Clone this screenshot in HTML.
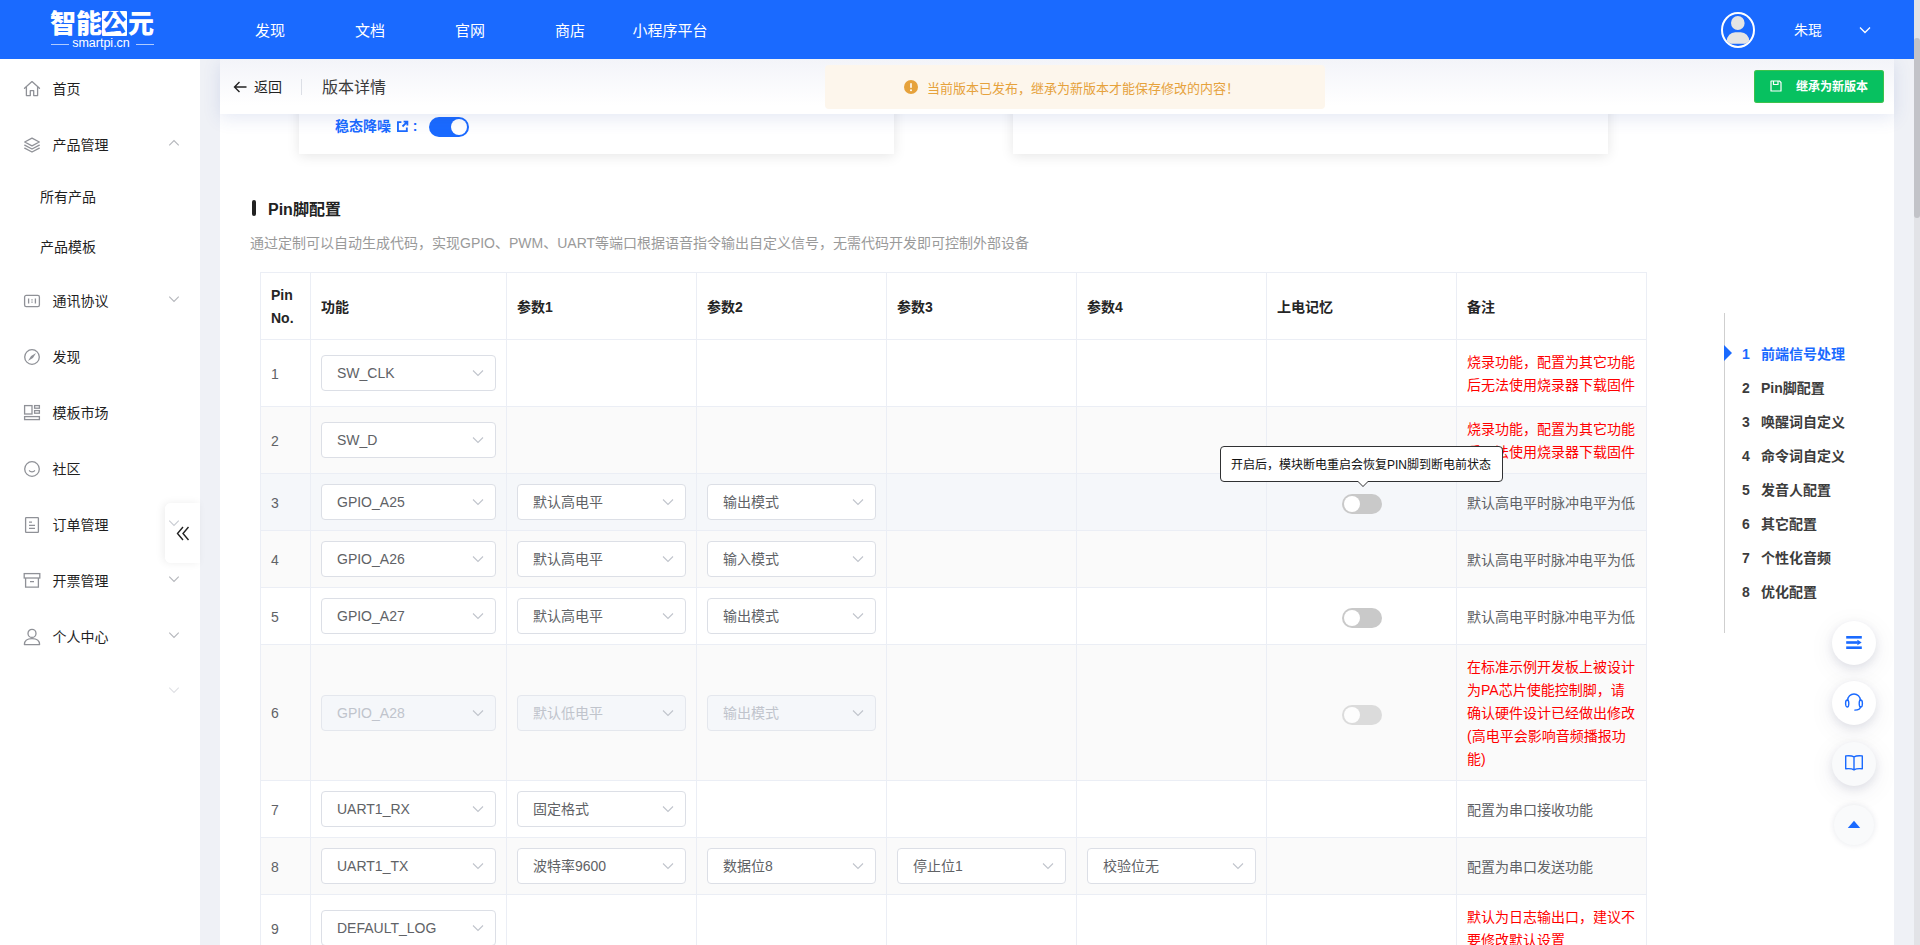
<!DOCTYPE html>
<html lang="zh-CN">
<head>
<meta charset="utf-8">
<title>版本详情</title>
<style>
*{box-sizing:border-box;margin:0;padding:0}
html,body{width:1920px;height:945px;overflow:hidden}
body{font-family:"Liberation Sans","Noto Sans CJK SC",sans-serif;font-size:14px;color:#333;background:#eff1f6;position:relative}
/* header */
#hdr{position:absolute;left:0;top:0;width:1914px;height:59px;background:#1a6aff;z-index:30}
#hdr .nav{position:absolute;top:0;height:59px;width:100px;text-align:center;line-height:62px;color:#fff;font-size:15px}
#logo{position:absolute;left:48px;top:8px;width:108px;height:44px;color:#fff}
#logo .cn{position:absolute;left:0;top:-1px;width:108px;text-align:center;font-size:26px;font-weight:900;line-height:34px;white-space:nowrap}
#logo .cn b{display:inline-block;background:#fff;color:#1a6aff;height:25px;line-height:24px;width:25px;margin:0 1px 0 0;font-weight:900;font-size:24px;vertical-align:2px;text-align:center;border-radius:1px}
#logo .en{position:absolute;left:-1px;top:28px;width:108px;text-align:center;font-size:12.500px;line-height:14px}
#logo .ln{position:absolute;top:36px;height:1px;width:18px;background:rgba(255,255,255,.65)}
#user{position:absolute;left:1721px;top:12px;width:34px;height:36px}
#uname{position:absolute;left:1794px;top:0;line-height:61px;color:#fff;font-size:14px}
/* sidebar */
#side{position:absolute;left:0;top:59px;width:200px;height:886px;background:#fff;z-index:5}
.mi{position:absolute;left:0;width:200px;height:56px;line-height:56px;font-size:14px;color:#1f1f1f}
.mi .tx{position:absolute;left:52.5px;top:1px}
.mi svg.ic{position:absolute;left:22px;top:19px;width:20px;height:20px;fill:none;stroke:#8f9197;stroke-width:1.3}
svg.ar{position:absolute;left:168px;width:12px;height:8px;fill:none;stroke:#b4b6bb;stroke-width:1.1}
.smi{position:absolute;left:40px;height:50px;line-height:50px;font-size:14px;color:#1f1f1f}
#coll{position:absolute;left:165px;top:503px;width:35px;height:60px;background:rgba(255,255,255,.93);border-radius:6px 0 0 6px;box-shadow:-2px 0 8px rgba(0,0,0,.07);z-index:6}
#coll svg{position:absolute;left:11px;top:23px;width:14px;height:15px;fill:none;stroke:#222;stroke-width:1.4}
/* scrollbar */
#sbar{position:absolute;left:1914px;top:0;width:6px;height:945px;background:#e2e3e7;z-index:40}
#sbar i{position:absolute;left:0;top:38px;width:6px;height:180px;background:#c2c3c8;border-radius:3px}
/* content */
#main{position:absolute;left:220px;top:59px;width:1674px;height:886px;background:#fff;z-index:1;overflow:hidden}
#bar{position:absolute;left:220px;top:59px;width:1674px;height:55px;background:linear-gradient(#f3f4f9,#fff 85%);box-shadow:0 4px 18px rgba(50,80,170,.13);z-index:10}
#bar .back{position:absolute;left:34px;top:0;line-height:56px;font-size:14px;color:#222}
#bar .div{position:absolute;left:81px;top:20px;width:1px;height:16px;background:#dcdfe6}
#bar .ttl{position:absolute;left:102px;top:0;line-height:57px;font-size:16px;color:#3a3a3a}
#alert{position:absolute;left:605px;top:6px;width:500px;height:44px;background:#fdf6ec;border-radius:4px;color:#e6a23c;font-size:13px;line-height:48px}
#alert span{position:absolute;left:102px;top:0;white-space:nowrap}
#alert svg{position:absolute;left:79px;top:15px;width:14px;height:14px}
#gbtn{position:absolute;left:1534px;top:11px;width:130px;height:33px;background:#07c160;box-shadow:inset 0 0 0 1px rgba(103,194,58,.55);border-radius:3px;color:#fff;font-size:12px;font-weight:700;line-height:35px}
#gbtn span{position:absolute;left:42px;top:0;white-space:nowrap}
#gbtn svg{position:absolute;left:16px;top:10px;width:12px;height:12px;fill:none;stroke:#fff;stroke-width:1.2}
.card{position:absolute;top:-40px;height:135px;width:595px;background:#fff;box-shadow:0 2px 12px rgba(0,0,0,.10)}
.sw{position:absolute;width:40px;height:20px;border-radius:10px}
.sw i{position:absolute;top:2px;width:16px;height:16px;border-radius:8px;background:#fff}
.sw.on{background:#1a6aff}.sw.on i{left:22px}
.sw.off{background:#c9c9c9}.sw.dis{opacity:.62}.sw.off i{left:2px}
#sec{position:absolute;left:48px;top:139px;font-size:16px;font-weight:700;color:#222;line-height:24px}
#sec:before{content:"";position:absolute;left:-16px;top:2px;width:4px;height:16px;border-radius:2px;background:#222}
#desc{position:absolute;left:30px;top:174px;font-size:14px;color:#9a9a9a;line-height:20px;white-space:nowrap}
/* table */
#tb{position:absolute;left:40px;top:213px;width:1387px;border-collapse:separate;border-spacing:0;table-layout:fixed;border-top:1px solid #ebeef5;border-left:1px solid #ebeef5;font-size:14px;color:#606266}
#tb th,#tb td{border-right:1px solid #ebeef5;border-bottom:1px solid #ebeef5;padding:10px;line-height:23px;text-align:left;vertical-align:middle;white-space:nowrap}
#tb th{font-weight:700;color:#252525;background:#fff;padding:11px 10px 9px}
#tb td.t{padding:11px 10px 9px}
#tb tr.s td{background:#fafafa}
#tb tr.h td{background:#f5f7fa}
#tb td.r{color:#f00}
.sel{position:relative;height:36px;border:1px solid #dcdfe6;border-radius:4px;background:#fff;line-height:34px;padding-left:15px;color:#606266;font-size:14px}
.sel svg{position:absolute;right:11px;top:13px;width:12px;height:8px;fill:none;stroke:#c0c4cc;stroke-width:1.1}
.sel.d{background:#f5f7fa;border-color:#e4e7ed;color:#c0c4cc}
td .sw{position:relative;display:block;margin:0 auto;top:2px}
/* tooltip */
#tip{position:absolute;left:1220px;top:446px;width:283px;height:36px;border:1px solid #303133;border-radius:4px;background:#fff;color:#111;font-size:12px;line-height:36px;padding-left:10px;z-index:20;white-space:nowrap}
#tip:before,#tip:after{content:"";position:absolute;left:136px;border:6px solid transparent;border-bottom-width:0}
#tip:before{top:34px;border-top-color:#303133}
#tip:after{top:33px;border-top-color:#fff}
/* anchor */
#anc{position:absolute;left:1724px;top:313px;width:1px;height:320px;background:#cfcfcf;z-index:8}
.an{position:absolute;left:1742px;font-size:14px;font-weight:700;color:#3c3c3c;line-height:20px;z-index:8;white-space:nowrap}
.an b{display:inline-block;width:19px;font-weight:700}
.an.a{color:#1a6aff}
#tri{position:absolute;left:1724px;top:345px;width:0;height:0;border:8px solid transparent;border-left:8px solid #1a6aff;border-right-width:0;z-index:9}
.fb{position:absolute;width:44px;height:44px;border-radius:22px;background:#fff;box-shadow:0 3px 10px rgba(20,30,70,.10),0 6px 28px rgba(20,30,70,.07);z-index:9}
.fb svg{position:absolute;left:12px;top:12px;width:20px;height:20px}
.fb.g{background:#f9fafb}
</style>
</head>
<body>
<div id="hdr">
  <div id="logo"><div class="cn">智能<b>公</b>元</div><div class="ln" style="left:3px"></div><div class="en">smartpi.cn</div><div class="ln" style="left:88px"></div></div>
  <div class="nav" style="left:220px">发现</div>
  <div class="nav" style="left:320px">文档</div>
  <div class="nav" style="left:420px">官网</div>
  <div class="nav" style="left:520px">商店</div>
  <div class="nav" style="left:620px">小程序平台</div>
  <svg id="user" viewBox="0 0 34 34" preserveAspectRatio="none"><defs><clipPath id="uc"><circle cx="17" cy="17" r="15"/></clipPath></defs><circle cx="17" cy="17" r="16" fill="#1a6aff" stroke="#fff" stroke-width="2"/><g clip-path="url(#uc)" fill="#e4e4e4"><ellipse cx="16.800" cy="10.400" rx="6.800" ry="6.600"/><path d="M5.800 30.100V27.500a8.400 8.400 0 0 1 8.400-8.400h5.600a8.400 8.400 0 0 1 8.400 8.400v2.600z"/></g></svg>
  <div id="uname">朱琨</div>
  <svg style="position:absolute;left:1859px;top:26px;width:12px;height:8px;fill:none;stroke:#fff;stroke-width:1.300" viewBox="0 0 12 8"><path d="M1 1.500 6 6.500 11 1.500"/></svg>
</div>
<div id="sbar"><i></i></div>
<div id="side">
<div class="mi" style="top:1px"><svg class="ic" viewBox="0 0 20 20"><path d="M2.5 9.2 10 2.6l7.5 6.6M4.4 8v8.6h3.9v-4.9h3.4v4.9h3.9V8" stroke-linejoin="round" stroke-linecap="round"/></svg><span class="tx">首页</span></div>
<div class="mi" style="top:57px"><svg class="ic" viewBox="0 0 20 20"><path d="M10 3.2 17.3 7 10 10.8 2.7 7zM2.7 10.2 10 14l7.3-3.8M2.7 13.2 10 17l7.3-3.8" stroke-linejoin="round" stroke-linecap="round"/></svg><span class="tx">产品管理</span><svg class="ar" style="top:22.700px" viewBox="0 0 12 8"><path d="M1.250 6.400 6 1.600 10.750 6.400"/></svg></div>
<div class="mi" style="top:213px"><svg class="ic" style="margin-top:-0.5px" viewBox="0 0 20 20"><rect x="2.6" y="4.4" width="14.8" height="11.2" rx="1.6"/><path d="M6.600 7.400v5.200M13.400 7.400v5.200M10 8.300v1.100M10 10.600v1.100"/></svg><span class="tx">通讯协议</span><svg class="ar" style="top:22.700px" viewBox="0 0 12 8"><path d="M1.250 1.600 6 6.400 10.750 1.600"/></svg></div>
<div class="mi" style="top:269px"><svg class="ic" viewBox="0 0 20 20"><circle cx="10" cy="10" r="7.3"/><path d="M14.100 5.900 10.900 10.900 5.900 14.100 9.100 9.100z" fill="#8f9197" stroke="none"/></svg><span class="tx">发现</span></div>
<div class="mi" style="top:325px"><svg class="ic" style="margin-top:-1px" viewBox="0 0 20 20"><rect x="2.6" y="3.6" width="7.4" height="8.4"/><rect x="12.6" y="3.6" width="4.8" height="2.6"/><rect x="12.6" y="8.6" width="4.8" height="2.6"/><rect x="2.6" y="14.6" width="14.8" height="3"/></svg><span class="tx">模板市场</span></div>
<div class="mi" style="top:381px"><svg class="ic" viewBox="0 0 20 20"><circle cx="10" cy="10" r="7.3"/><path d="M7.4 11.8c.8 1.4 4.4 1.4 5.2 0" stroke-linecap="round"/></svg><span class="tx">社区</span></div>
<div class="mi" style="top:437px"><svg class="ic" style="margin-top:-0.5px" viewBox="0 0 20 20"><rect x="3.6" y="2.6" width="12.8" height="14.8" rx="0.6"/><path d="M7 7.2h3M7 10.4h6M7 13.4h6"/></svg><span class="tx">订单管理</span><svg class="ar" style="top:22.700px" viewBox="0 0 12 8"><path d="M1.250 1.600 6 6.400 10.750 1.600"/></svg></div>
<div class="mi" style="top:493px"><svg class="ic" style="margin-top:-1.5px" viewBox="0 0 20 20"><rect x="2.2" y="3.6" width="15.6" height="4.4"/><path d="M3.6 8v9.2h12.8V8M8 11.6h4"/></svg><span class="tx">开票管理</span><svg class="ar" style="top:22.700px" viewBox="0 0 12 8"><path d="M1.250 1.600 6 6.400 10.750 1.600"/></svg></div>
<div class="mi" style="top:549px"><svg class="ic" viewBox="0 0 20 20"><circle cx="10" cy="6.4" r="4"/><path d="M2.4 17.6c0-4.2 3.2-6 7.6-6s7.6 1.8 7.6 6z" stroke-linejoin="round"/></svg><span class="tx">个人中心</span><svg class="ar" style="top:22.700px" viewBox="0 0 12 8"><path d="M1.250 1.600 6 6.400 10.750 1.600"/></svg></div>
<div class="smi" style="top:113px">所有产品</div>
<div class="smi" style="top:163px">产品模板</div>
<svg class="ar" style="top:626.700px;stroke:#dfe0e4" viewBox="0 0 12 8"><path d="M1.250 1.600 6 6.400 10.750 1.600"/></svg>
</div>
<div id="coll"><svg viewBox="0 0 12 8" style="left:3px;top:15.700px;width:12px;height:8px;stroke:#c9ccd3;stroke-width:1.100"><path d="M1.250 1.600 6 6.400 10.750 1.600"/></svg><svg viewBox="0 0 14 15"><path d="M7 1 1.500 7.500 7 14M12.500 1 7 7.500 12.500 14"/></svg></div>
<div id="main">
  <div class="card" style="left:79px">
    <div style="position:absolute;left:36px;top:97px;font-size:14px;font-weight:700;color:#1a6aff;line-height:20px;white-space:nowrap">稳态降噪 <svg viewBox="0 0 12 12" style="width:13px;height:13px;vertical-align:-1.500px;margin-left:1px;fill:none;stroke:#1a6aff;stroke-width:1.700"><path d="M5 2H1.800v8.200H10V7M7 1.500h3.500V5M10.500 1.500 6 6"/></svg> :</div>
    <div class="sw on" style="left:130px;top:98px"><i></i></div>
  </div>
  <div class="card" style="left:793px"></div>
  <div id="sec">Pin脚配置</div>
  <div id="desc">通过定制可以自动生成代码，实现GPIO、PWM、UART等端口根据语音指令输出自定义信号，无需代码开发即可控制外部设备</div>
  <table id="tb"><colgroup><col style="width:50px"><col style="width:196px"><col style="width:190px"><col style="width:190px"><col style="width:190px"><col style="width:190px"><col style="width:190px"><col style="width:190px"></colgroup>
<tr><th>Pin<br>No.</th><th>功能</th><th>参数1</th><th>参数2</th><th>参数3</th><th>参数4</th><th>上电记忆</th><th>备注</th></tr>
<tr><td class="t">1</td><td><div class="sel">SW_CLK<svg viewBox="0 0 12 8"><path d="M1 1.5 6 6.5 11 1.5"/></svg></div></td><td></td><td></td><td></td><td></td><td></td><td class="t r">烧录功能，配置为其它功能<br>后无法使用烧录器下载固件</td></tr>
<tr class="s"><td class="t">2</td><td><div class="sel">SW_D<svg viewBox="0 0 12 8"><path d="M1 1.5 6 6.5 11 1.5"/></svg></div></td><td></td><td></td><td></td><td></td><td></td><td class="t r">烧录功能，配置为其它功能<br>后无法使用烧录器下载固件</td></tr>
<tr class="h"><td class="t">3</td><td><div class="sel">GPIO_A25<svg viewBox="0 0 12 8"><path d="M1 1.5 6 6.5 11 1.5"/></svg></div></td><td><div class="sel">默认高电平<svg viewBox="0 0 12 8"><path d="M1 1.5 6 6.5 11 1.5"/></svg></div></td><td><div class="sel">输出模式<svg viewBox="0 0 12 8"><path d="M1 1.5 6 6.5 11 1.5"/></svg></div></td><td></td><td></td><td><span class="sw off"><i></i></span></td><td class="t">默认高电平时脉冲电平为低</td></tr>
<tr class="s"><td class="t">4</td><td><div class="sel">GPIO_A26<svg viewBox="0 0 12 8"><path d="M1 1.5 6 6.5 11 1.5"/></svg></div></td><td><div class="sel">默认高电平<svg viewBox="0 0 12 8"><path d="M1 1.5 6 6.5 11 1.5"/></svg></div></td><td><div class="sel">输入模式<svg viewBox="0 0 12 8"><path d="M1 1.5 6 6.5 11 1.5"/></svg></div></td><td></td><td></td><td></td><td class="t">默认高电平时脉冲电平为低</td></tr>
<tr><td class="t">5</td><td><div class="sel">GPIO_A27<svg viewBox="0 0 12 8"><path d="M1 1.5 6 6.5 11 1.5"/></svg></div></td><td><div class="sel">默认高电平<svg viewBox="0 0 12 8"><path d="M1 1.5 6 6.5 11 1.5"/></svg></div></td><td><div class="sel">输出模式<svg viewBox="0 0 12 8"><path d="M1 1.5 6 6.5 11 1.5"/></svg></div></td><td></td><td></td><td><span class="sw off"><i></i></span></td><td class="t">默认高电平时脉冲电平为低</td></tr>
<tr class="s"><td class="t">6</td><td><div class="sel d">GPIO_A28<svg viewBox="0 0 12 8"><path d="M1 1.5 6 6.5 11 1.5"/></svg></div></td><td><div class="sel d">默认低电平<svg viewBox="0 0 12 8"><path d="M1 1.5 6 6.5 11 1.5"/></svg></div></td><td><div class="sel d">输出模式<svg viewBox="0 0 12 8"><path d="M1 1.5 6 6.5 11 1.5"/></svg></div></td><td></td><td></td><td><span class="sw off dis"><i></i></span></td><td class="t r">在标准示例开发板上被设计<br>为PA芯片使能控制脚，请<br>确认硬件设计已经做出修改<br>(高电平会影响音频播报功<br>能)</td></tr>
<tr><td class="t">7</td><td><div class="sel">UART1_RX<svg viewBox="0 0 12 8"><path d="M1 1.5 6 6.5 11 1.5"/></svg></div></td><td><div class="sel">固定格式<svg viewBox="0 0 12 8"><path d="M1 1.5 6 6.5 11 1.5"/></svg></div></td><td></td><td></td><td></td><td></td><td class="t">配置为串口接收功能</td></tr>
<tr class="s"><td class="t">8</td><td><div class="sel">UART1_TX<svg viewBox="0 0 12 8"><path d="M1 1.5 6 6.5 11 1.5"/></svg></div></td><td><div class="sel">波特率9600<svg viewBox="0 0 12 8"><path d="M1 1.5 6 6.5 11 1.5"/></svg></div></td><td><div class="sel">数据位8<svg viewBox="0 0 12 8"><path d="M1 1.5 6 6.5 11 1.5"/></svg></div></td><td><div class="sel">停止位1<svg viewBox="0 0 12 8"><path d="M1 1.5 6 6.5 11 1.5"/></svg></div></td><td><div class="sel">校验位无<svg viewBox="0 0 12 8"><path d="M1 1.5 6 6.5 11 1.5"/></svg></div></td><td></td><td class="t">配置为串口发送功能</td></tr>
<tr><td class="t">9</td><td><div class="sel">DEFAULT_LOG<svg viewBox="0 0 12 8"><path d="M1 1.5 6 6.5 11 1.5"/></svg></div></td><td></td><td></td><td></td><td></td><td></td><td class="t r">默认为日志输出口，建议不<br>要修改默认设置</td></tr>
</table>
</div>
<div id="bar">
  <div class="back"><svg viewBox="0 0 14 12" style="position:absolute;left:-21px;top:22px;width:14px;height:12px;fill:none;stroke:#222;stroke-width:1.400"><path d="M6.500 1 1.500 6l5 5M1.500 6H13.500"/></svg>返回</div>
  <div class="div"></div>
  <div class="ttl">版本详情</div>
  <div id="alert"><svg viewBox="0 0 14 14"><circle cx="7" cy="7" r="7" fill="#e6a23c"/><rect x="6.200" y="3" width="1.600" height="5" rx=".8" fill="#fff"/><circle cx="7" cy="10.300" r="1" fill="#fff"/></svg><span>当前版本已发布，继承为新版本才能保存修改的内容！</span></div>
  <div id="gbtn"><svg viewBox="0 0 12 12"><path d="M1 1h8.500L11 2.500V11H1z" stroke-linejoin="round"/><path d="M3.500 1v3.500h4.500V1"/></svg><span>继承为新版本</span></div>
</div>
<div id="tip">开启后，模块断电重启会恢复PIN脚到断电前状态</div>
<div id="anc"></div><div id="tri"></div>
<div class="an a" style="top:344px"><b>1</b>前端信号处理</div>
<div class="an" style="top:378px"><b>2</b>Pin脚配置</div>
<div class="an" style="top:412px"><b>3</b>唤醒词自定义</div>
<div class="an" style="top:446px"><b>4</b>命令词自定义</div>
<div class="an" style="top:480px"><b>5</b>发音人配置</div>
<div class="an" style="top:514px"><b>6</b>其它配置</div>
<div class="an" style="top:548px"><b>7</b>个性化音频</div>
<div class="an" style="top:582px"><b>8</b>优化配置</div>

<div class="fb" style="left:1832px;top:621px"><svg viewBox="0 0 20 20" fill="#1a6aff"><rect x="2.2" y="3" width="15.6" height="2.6"/><rect x="2.2" y="8.2" width="11.6" height="2.6"/><path d="M13.4 6.800 17.700 9.500 13.400 12.200z"/><rect x="2.2" y="13.400" width="15.600" height="2.600"/></svg></div>
<div class="fb" style="left:1832px;top:681px"><svg viewBox="0 0 20 20" fill="none" stroke="#1a6aff" stroke-width="1.4"><path d="M3.700 8V7.250a6.300 6.300 0 0 1 12.600 0V8"/><ellipse cx="3.200" cy="10.500" rx="1.600" ry="3.500"/><ellipse cx="16.800" cy="10.500" rx="1.600" ry="3.500"/><path d="M16.400 13.800c0 2.300-2.200 3.300-5.600 3.300" stroke-linecap="round"/></svg></div>
<div class="fb g" style="left:1832px;top:741.500px"><svg style="top:11px" viewBox="0 0 20 20" fill="none" stroke="#1a6aff" stroke-width="1.400" stroke-linejoin="round"><path d="M10 3.800C8 2.700 4.500 2.600 1.700 2.900v12.900c2.800-.3 6.300-.2 8.300 1 2-1.200 5.500-1.300 8.300-1V2.900C15.500 2.600 12 2.700 10 3.800zM10 3.800v13"/></svg></div>
<div class="fb g" style="left:1834px;top:805px;width:40px;height:40px;box-shadow:0 0 6px rgba(20,30,70,.10)"><svg viewBox="0 0 20 20" fill="#1a6aff" style="left:10px;top:10px"><path d="M10 5.700 16.200 13.100H3.800z"/></svg></div>

</body>
</html>
